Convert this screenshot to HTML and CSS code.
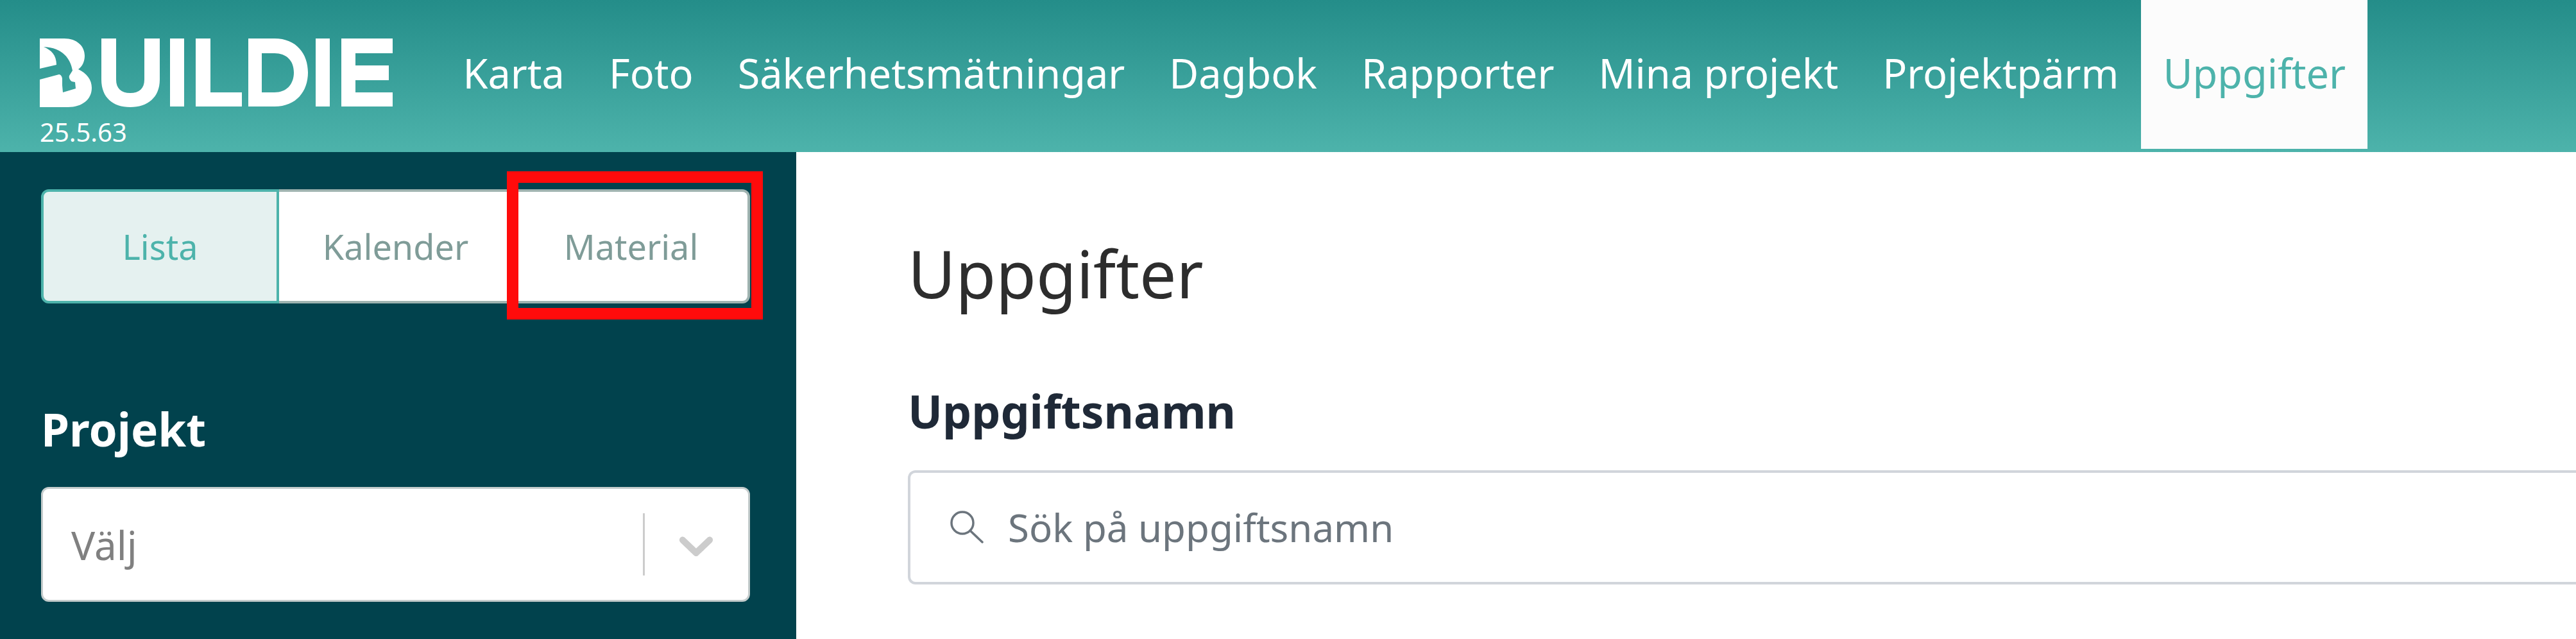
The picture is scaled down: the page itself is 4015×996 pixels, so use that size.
FILE: index.html
```html
<!DOCTYPE html>
<html lang="en">
<head>
  <meta charset="UTF-8">
  <title>Uppgifter</title>
  <link rel="stylesheet" href="styles.css">
</head>
<body>
<header class="topbar">
  <div class="brand">
    <svg class="logo" viewBox="0 0 550 107" width="550" height="107" role="img" aria-label="Buildie">
      <path fill="#fff" d="M0 0H38C58 0 70 12 70 27C70 36 66 44 60 48C73 54 81 64 81 77C81 95 66 107 44 107H0V64L30 56C33 56 35 60 35 63L35 73L36 84L56 78L55 68L50 67C47 65 45 61 46 58L51 50C48 32 36 14 6 13C18 18 26 26 26 41L0 47Z"/>
      <path fill="#fff" d="M96 0H119V64C119 78 127 85 141 85C155 85 163 78 163 64V0H187V64C187 92 168 107 141 107C114 107 96 92 96 64Z"/>
      <rect fill="#fff" x="203" y="0" width="22" height="106"/>
      <path fill="#fff" d="M243 0H266V84H315V106H243Z"/>
      <path fill="#fff" fill-rule="evenodd" d="M325 0H366C400 0 418 24 418 53C418 82 400 106 366 106H325ZM346 23V84H366C384 84 396 72 396 53C396 34 384 23 366 23Z"/>
      <rect fill="#fff" x="430" y="0" width="22" height="106"/>
      <path fill="#fff" d="M470 0H550V23H492V42H544V65H492V84H550V106H470Z"/>
    </svg>
    <span class="version">25.5.63</span>
  </div>
  <nav class="mainnav">
    <a href="#">Karta</a>
    <a href="#">Foto</a>
    <a href="#">Säkerhetsmätningar</a>
    <a href="#">Dagbok</a>
    <a href="#">Rapporter</a>
    <a href="#">Mina projekt</a>
    <a href="#">Projektpärm</a>
    <a href="#" class="active">Uppgifter</a>
  </nav>
</header>

<div class="page">
  <aside class="sidebar">
    <div class="tabs">
      <a href="#" class="tab active">Lista</a>
      <a href="#" class="tab">Kalender</a>
      <a href="#" class="tab marked">Material</a>
    </div>
    <h3 class="side_label">Projekt</h3>
    <div class="select">
      <span class="select_value">Välj</span>
      <span class="select_sep"></span>
      <svg class="select_arrow" viewBox="0 0 20 20" width="90" height="90"><path fill="#ccc" d="M4.516 7.548c0.436-0.446 1.043-0.481 1.576 0l3.908 3.747 3.908-3.747c0.533-0.481 1.141-0.446 1.574 0 0.436 0.445 0.408 1.197 0 1.615-0.406 0.418-4.695 4.502-4.695 4.502-0.217 0.223-0.502 0.335-0.787 0.335s-0.57-0.112-0.789-0.335c0 0-4.287-4.084-4.695-4.502s-0.436-1.17 0-1.615z"/></svg>
    </div>
  </aside>

  <main class="content">
    <h1>Uppgifter</h1>
    <label class="field_label">Uppgiftsnamn</label>
    <div class="search">
      <svg class="search_icon" viewBox="0 0 52 52" width="52" height="52" fill="none" stroke="#6c757d" stroke-width="3.500" stroke-linecap="round"><circle cx="19" cy="19" r="17"/><path d="M31 31l19 18"/></svg>
      <span>Sök på uppgiftsnamn</span>
    </div>
  </main>
</div>
</body>
</html>
```

FILE: styles.css
```css
* {
  box-sizing: border-box;
}

html, body {
  height: 100%;
}

body {
  margin: 0;
  background: #fff;
  font-family: "Noto Sans", "Open Sans", sans-serif;
  overflow: hidden;
}

.topbar {
  display: flex;
  height: 237px;
  padding-left: 62px;
  background: linear-gradient(#248d89, #4db3ab);
}

.brand {
  width: 625px;
  padding-top: 60px;
  color: #fff;
}

.logo {
  display: block;
}

.version {
  display: block;
  margin-top: 16px;
  font-size: 40px;
  line-height: 46px;
}

.mainnav {
  display: flex;
  height: 232px;
}

.mainnav a {
  padding: 71px 34.5px 0;
  color: #fff;
  font-size: 63px;
  line-height: 86px;
  text-decoration: none;
  white-space: nowrap;
}

.mainnav a.active {
  background: #fcfcfc;
  color: #4db3ab;
}

.page {
  display: flex;
  height: 759px;
}

.sidebar {
  width: 1241px;
  padding: 58px 72px 0 64px;
  background: #01424d;
}

.tabs {
  display: flex;
  height: 178px;
}

.tab {
  flex: 1;
  display: flex;
  align-items: center;
  justify-content: center;
  position: relative;
  background: #fff;
  border: 4px solid #9fb3b0;
  border-left: 0;
  color: #7f9c98;
  font-size: 54px;
  text-decoration: none;
}

.tab:first-child {
  border-radius: 12px 0 0 12px;
}

.tab:last-child {
  border-radius: 0 12px 12px 0;
}

.tab.active {
  background: #e5f1f0;
  border: 4px solid #4db3ab;
  color: #4db3ab;
}

/* red highlight drawn on top of the third tab */
.tab.marked::after {
  content: "";
  position: absolute;
  top: -32px;
  right: -24px;
  bottom: -29px;
  left: -12px;
  border: 18px solid #ff0b0b;
}

.side_label {
  margin: 148px 0 42px;
  color: #fff;
  font-size: 71px;
  line-height: 96px;
  font-weight: 700;
}

.select {
  display: flex;
  align-items: center;
  height: 179px;
  padding: 0 36px 0 44px;
  background: #fff;
  border: 3px solid #c4cccc;
  border-radius: 12px;
}

.select_value {
  flex: 1;
  color: #808080;
  font-size: 62px;
}

.select_sep {
  width: 3px;
  height: 97px;
  margin-right: 35px;
  background: #ccc;
}

.content {
  flex: 1;
  padding: 119px 0 0 174px;
}

.content h1 {
  margin: 0 0 97px;
  color: #2d2d2d;
  font-size: 102px;
  line-height: 139px;
  font-weight: 400;
}

.field_label {
  display: block;
  margin-bottom: 43px;
  color: #1f2937;
  font-size: 71.5px;
  line-height: 98px;
  font-weight: 700;
}

.search {
  display: flex;
  align-items: center;
  gap: 38px;
  height: 178px;
  padding-left: 62px;
  border: 4px solid #d1d5db;
  border-right: 0;
  border-radius: 12px 0 0 12px;
  color: #6c757d;
  font-size: 60px;
}
```
